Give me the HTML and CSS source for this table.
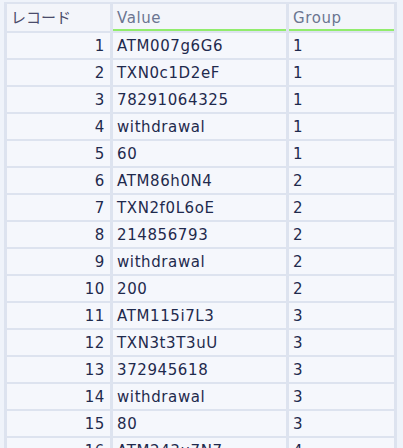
FILE: index.html
```html
<!DOCTYPE html>
<html lang="ja">
<head>
<meta charset="utf-8">
<link rel="stylesheet" href="styles.css">
</head>
<body>
<div class="wrap">
<table class="grid">
<thead>
<tr><th class="rec">レコード</th><th class="col">Value</th><th class="col">Group</th></tr>
</thead>
<tbody>
<tr><td class="num">1</td><td>ATM007g6G6</td><td>1</td></tr>
<tr><td class="num">2</td><td>TXN0c1D2eF</td><td>1</td></tr>
<tr><td class="num">3</td><td>78291064325</td><td>1</td></tr>
<tr><td class="num">4</td><td>withdrawal</td><td>1</td></tr>
<tr><td class="num">5</td><td>60</td><td>1</td></tr>
<tr><td class="num">6</td><td>ATM86h0N4</td><td>2</td></tr>
<tr><td class="num">7</td><td>TXN2f0L6oE</td><td>2</td></tr>
<tr><td class="num">8</td><td>214856793</td><td>2</td></tr>
<tr><td class="num">9</td><td>withdrawal</td><td>2</td></tr>
<tr><td class="num">10</td><td>200</td><td>2</td></tr>
<tr><td class="num">11</td><td>ATM115i7L3</td><td>3</td></tr>
<tr><td class="num">12</td><td>TXN3t3T3uU</td><td>3</td></tr>
<tr><td class="num">13</td><td>372945618</td><td>3</td></tr>
<tr><td class="num">14</td><td>withdrawal</td><td>3</td></tr>
<tr><td class="num">15</td><td>80</td><td>3</td></tr>
<tr><td class="num">16</td><td>ATM243u7N7</td><td>4</td></tr>
</tbody>
</table>
</div>
</body>
</html>
```
FILE: styles.css
```css
html, body {
  margin: 0;
  padding: 0;
  background: #eff3fa;
  overflow: hidden;
}
.wrap {
  padding: 2px 0 0 4px;
}
.grid {
  border-collapse: separate;
  border-spacing: 3px 2px;
  background: #dde3ef;
  font-family: "DejaVu Sans", Verdana, sans-serif;
  font-size: 15px;
  letter-spacing: 0.6px;
  color: #1f2a4d;
  table-layout: fixed;
  width: 393px;
  margin-left: -3px;
  border-left: 3px solid #eff3fa;
}
.grid th, .grid td {
  background: #f5f7fc;
  height: 25px;
  padding: 0 4px;
  box-sizing: border-box;
  text-align: left;
  font-weight: normal;
  white-space: nowrap;
  overflow: hidden;
  vertical-align: top;
}
.grid td {
  padding-top: 1px;
  line-height: 24px;
}
.grid th {
  height: 27px;
  padding-top: 3px;
  color: #6b7591;
  background: #f3f5fa;
  line-height: 22px;
}
.grid th.rec {
  width: 103px;
  color: #4a4b6b;
  font-family: "Noto Sans CJK JP", sans-serif;
  font-size: 15px;
  letter-spacing: 0;
  padding-top: 2px;
}
.grid th.col {
  border-bottom: 2px solid #91ec6c;
}
.grid th:nth-child(2) { width: 173px; }
.grid th:nth-child(3) { width: 105px; }
.grid td.num {
  text-align: right;
  padding-right: 5px;
}
```
